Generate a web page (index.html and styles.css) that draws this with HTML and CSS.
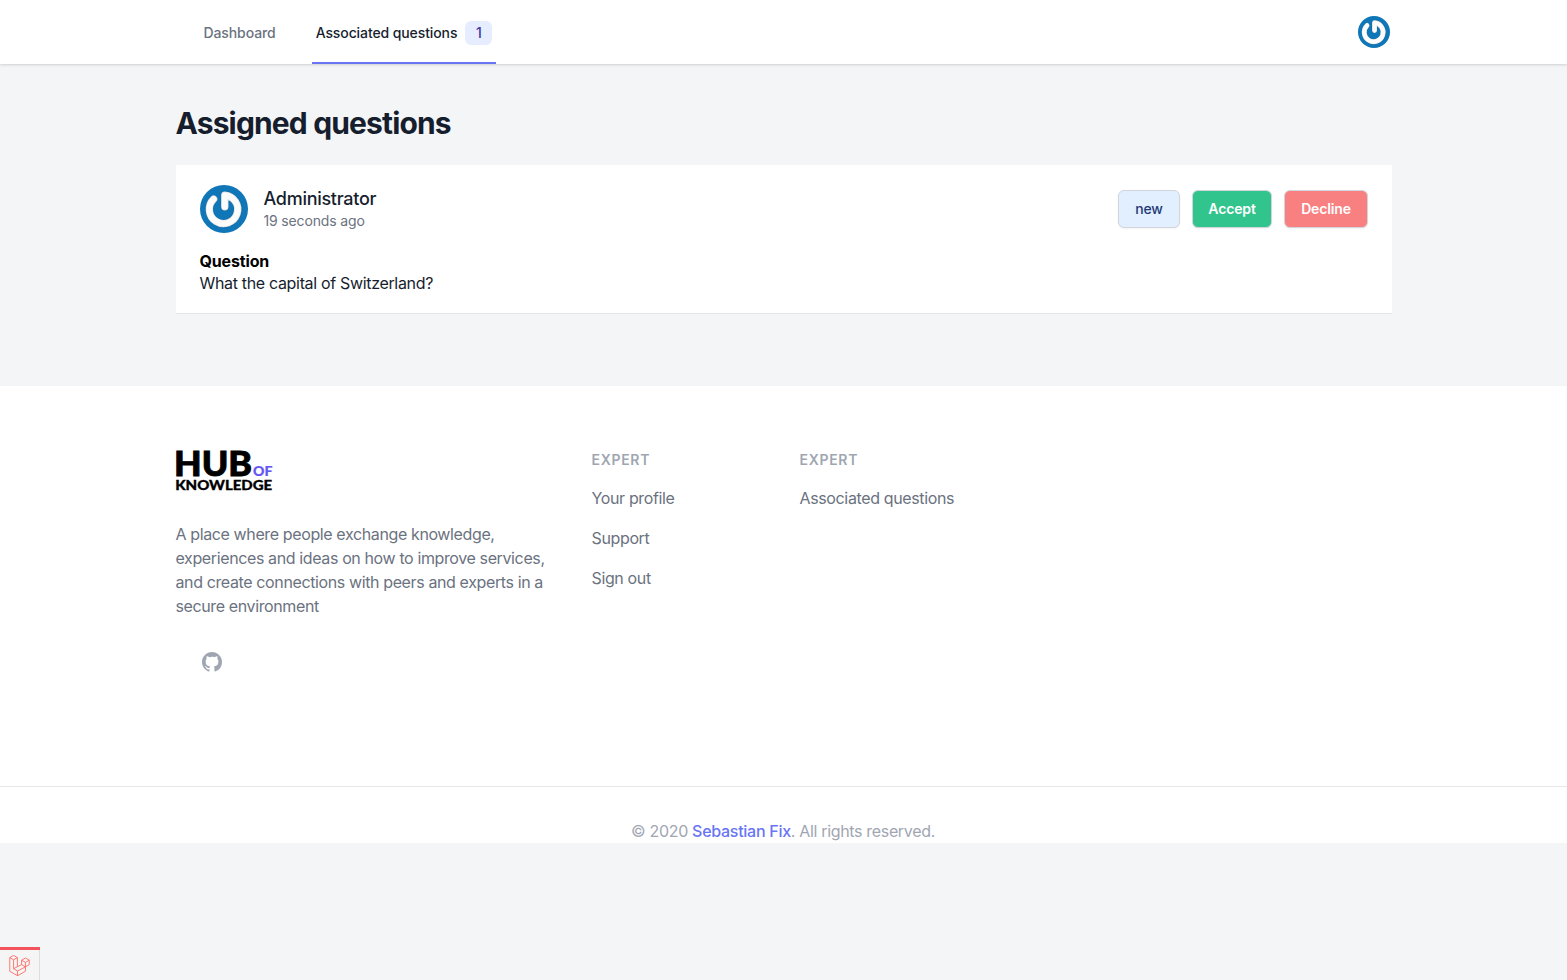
FILE: index.html
```html
<!DOCTYPE html>
<html lang="en">
<head>
<meta charset="utf-8">
<title>Assigned questions</title>
<link rel="stylesheet" href="styles.css">
</head>
<body>
<svg width="0" height="0" class="defs" aria-hidden="true">
  <symbol id="power" viewBox="0 0 48 48">
    <circle cx="24" cy="24" r="24" fill="#0f76b8"/>
    <g fill="none" stroke-linecap="round" stroke-linejoin="round">
      <path d="M13.6 14.2A14.2 14.2 0 1 0 24.8 10.2V21.8" stroke="#0a5b91" stroke-opacity=".35" stroke-width="8.4"/>
      <path d="M13.6 14.2A14.2 14.2 0 1 0 24.8 10.2V21.8" stroke="#dcdcdc" stroke-width="7.4"/>
      <path d="M13.6 14.2A14.2 14.2 0 1 0 24.8 10.2V21.8" stroke="#fcfcfc" stroke-width="6"/>
    </g>
  </symbol>
</svg>
<header class="nav">
  <div class="container nav-row">
    <nav class="tabs">
      <a class="tab"><span class="t-dash">Dashboard</span></a>
      <a class="tab active"><span class="t-assoc">Associated questions</span><span class="count">1</span></a>
    </nav>
    <svg class="avatar-sm"><use href="#power"/></svg>
  </div>
</header>
<main class="container main">
  <h1>Assigned questions</h1>
  <section class="card">
    <div class="card-head">
      <svg class="avatar"><use href="#power"/></svg>
      <div class="who">
        <div class="name">Administrator</div>
        <div class="time">19 seconds ago</div>
      </div>
      <div class="actions">
        <button class="btn new">new</button>
        <button class="btn accept">Accept</button>
        <button class="btn decline">Decline</button>
      </div>
    </div>
    <div class="q-title">Question</div>
    <div class="q-text">What the capital of Switzerland?</div>
  </section>
</main>
<footer class="footer">
  <div class="container footer-grid">
    <div class="about">
      <svg class="logo" width="97" height="40" viewBox="0 0 97 40">
        <text class="logo-hub" x="-2" y="25.8" textLength="78" lengthAdjust="spacingAndGlyphs">HUB</text>
        <text class="logo-of" x="77" y="25.6" textLength="19.4" lengthAdjust="spacingAndGlyphs">OF</text>
        <text class="logo-know" x="-.8" y="39.7" textLength="97" lengthAdjust="spacingAndGlyphs">KNOWLEDGE</text>
      </svg>
      <p class="blurb">A place where people exchange knowledge,<br>experiences and ideas on how to improve services,<br>and create connections with peers and experts in a<br>secure environment</p>
      <svg class="github" viewBox="0 0 24 24"><path fill-rule="evenodd" clip-rule="evenodd" d="M12 2C6.477 2 2 6.484 2 12.017c0 4.425 2.865 8.18 6.839 9.504.5.092.682-.217.682-.483 0-.237-.008-.868-.013-1.703-2.782.605-3.369-1.343-3.369-1.343-.454-1.158-1.11-1.466-1.11-1.466-.908-.62.069-.608.069-.608 1.003.07 1.531 1.032 1.531 1.032.892 1.53 2.341 1.088 2.91.832.092-.647.35-1.088.636-1.338-2.22-.253-4.555-1.113-4.555-4.951 0-1.093.39-1.988 1.029-2.688-.103-.253-.446-1.272.098-2.65 0 0 .84-.27 2.75 1.026A9.564 9.564 0 0112 6.844c.85.004 1.705.115 2.504.337 1.909-1.296 2.747-1.027 2.747-1.027.546 1.379.202 2.398.1 2.651.64.7 1.028 1.595 1.028 2.688 0 3.848-2.339 4.695-4.566 4.943.359.309.678.92.678 1.855 0 1.338-.012 2.419-.012 2.747 0 .268.18.58.688.482A10.019 10.019 0 0022 12.017C22 6.484 17.522 2 12 2z"/></svg>
    </div>
    <div class="col">
      <h4>EXPERT</h4>
      <a>Your profile</a>
      <a>Support</a>
      <a>Sign out</a>
    </div>
    <div class="col">
      <h4>EXPERT</h4>
      <a>Associated questions</a>
    </div>
  </div>
  <div class="legal"><p>© 2020 <b>Sebastian Fix</b>. All rights reserved.</p></div>
</footer>
<div class="debugbar">
  <svg viewBox="0 0 50 52"><path d="M.9 6.4 10.3 1l9.5 5.4v22M.9 6.4v34l19.2 11 19.6-11.2V29.4l9.4-5.5V12.8L39.7 7.4l-9.5 5.4v11l9.5 5.6V18.3l9.4-5.5M30.2 12.8l9.5 5.5M.9 6.4l9.4 5.5 9.5-5.5M10.3 11.9v22l9.8 5.7v11.8M10.3 33.9l19.9-10.1M20.1 39.6l19.6-10.2"/></svg>
</div>
</body>
</html>
```
FILE: styles.css
```css
* { box-sizing: border-box; }
body { margin: 0; height: 980px; overflow: hidden; background: #f4f5f7; color: #161e2e; font-family: Inter, "Liberation Sans", sans-serif; font-size: 16px; line-height: 24px; white-space: nowrap; }
h1, h4, p { margin: 0; }
svg { display: block; }
.defs { position: absolute; }
.container { width: 1216px; margin: 0 auto; }
.nav { height: 64px; background: #fff; box-shadow: 0 1px 3px rgba(0,0,0,.1), 0 1px 2px rgba(0,0,0,.06); }
.nav-row { display: flex; justify-content: space-between; padding: 0 2px 0 24px; }
.tabs { display: flex; gap: 32px; height: 64px; }
.tab { display: flex; align-items: center; gap: 8px; padding: 4px 4px 0; border-bottom: 2px solid transparent; font-size: 14px; line-height: 20px; font-weight: 500; color: #6b7280; }
.tab.active { color: #161e2e; border-color: #6875f5; }
.t-dash, .t-assoc { letter-spacing: -.1px; }
.count { width: 27px; text-align: center; padding: 2px 0; border-radius: 6px; background: #e5edff; color: #42389d; }
.avatar-sm { width: 32px; height: 32px; margin-top: 16px; }
.main { padding: 41px 0 72px; }
h1 { font-size: 30px; line-height: 36px; font-weight: 700; letter-spacing: -.85px; }
.card { margin-top: 24px; height: 149px; padding: 20px 24px; background: #fff; border-bottom: 1px solid #e5e7eb; }
.card-head { display: flex; align-items: center; height: 48px; }
.avatar { width: 48px; height: 48px; }
.who { margin-left: 16px; flex: 1; }
.name { font-size: 18px; line-height: 23px; font-weight: 500; letter-spacing: -.28px; }
.time { font-size: 14px; line-height: 21px; letter-spacing: -.15px; color: #6b7280; }
.actions { display: flex; gap: 12px; }
.btn { height: 38px; padding: 0 0 0 1px; border: 1px solid #d2d6dc; border-radius: 6px; font: 500 14px/20px Inter, sans-serif; letter-spacing: -.15px; color: #fff; box-shadow: 0 1px 2px rgba(0,0,0,.05); }
.new { width: 62px; background: #e1effe; color: #233876; }
.accept { width: 80px; background: #31c48d; font-weight: 600; }
.decline { width: 84px; background: #f98080; font-weight: 600; }
.q-title { margin-top: 17px; line-height: 22px; font-weight: 700; letter-spacing: -.15px; color: #000; }
.q-text { line-height: 22px; letter-spacing: -.33px; }
.footer { height: 457px; background: #fff; color: #6b7280; }
.footer-grid { display: grid; grid-template-columns: 384px 176px 176px; gap: 32px; height: 400px; padding-top: 64px; }
.logo { overflow: visible; }
.logo-hub, .logo-of, .logo-know { font-family: Lato, sans-serif; font-weight: 900; fill: #000; }
.logo-hub { font-size: 35px; stroke: #000; stroke-width: .9px; }
.logo-of { font-size: 14px; fill: #6456f5; stroke: #6456f5; stroke-width: .2px; }
.logo-know { font-size: 13.8px; stroke: #000; stroke-width: .3px; }
.blurb { margin-top: 32px; letter-spacing: -.38px; }
.github { width: 24px; height: 24px; margin: 32px 0 0 24px; fill: #9fa6b2; }
h4 { font-size: 14px; line-height: 20px; font-weight: 600; letter-spacing: .7px; color: #9fa6b2; margin-bottom: 16px; }
.col a { display: block; margin-bottom: 16px; letter-spacing: -.36px; }
.legal { border-top: 1px solid #e5e7eb; padding: 32px 1px 0 0; text-align: center; letter-spacing: -.33px; color: #9fa6b2; }
.legal b { font-weight: 500; letter-spacing: -.28px; color: #6875f5; }
.debugbar { position: fixed; left: 0; bottom: 0; width: 40px; height: 33px; border-top: 3px solid #f4525c; padding: 5px 0 0 9px; background: #f5f5f5; box-shadow: inset -1px 0 #ddd; }
.debugbar svg { width: 21px; height: 21px; fill: none; stroke: #ff6a62; stroke-width: 2.2; stroke-linejoin: round; }
```
